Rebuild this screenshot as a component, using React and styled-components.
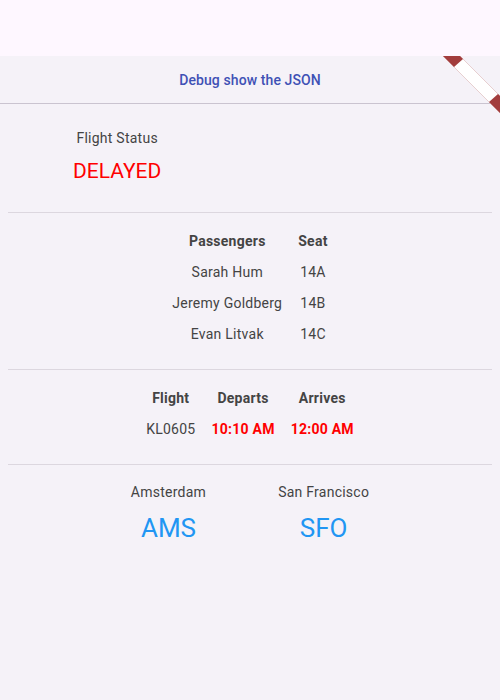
import React from "react";
import styled, { createGlobalStyle } from "styled-components";

const GlobalStyle = createGlobalStyle`
  body {
    margin: 0;
    background: #f5f2f8;
    font-family: Roboto, "Liberation Sans", sans-serif;
  }
`;

const Page = styled.div`
  position: relative;
  width: 500px;
  height: 700px;
  display: flex;
  flex-direction: column;
  background: #f5f2f8;
  overflow: hidden;
`;

const TopBar = styled.div`
  height: 56px;
  background: #fef7ff;
`;

const DebugBar = styled.div`
  height: 47px;
  display: flex;
  align-items: center;
  justify-content: center;
  border-bottom: 1px solid #cac4d0;
`;

const DebugLink = styled.span`
  color: #3f51b5;
  font-size: 14px;
  font-weight: 500;
  letter-spacing: 0.1px;
  cursor: pointer;
`;

const Content = styled.div`
  padding: 0 8px;
  display: flex;
  flex-direction: column;
`;

const Section = styled.div`
  padding: ${(p) => p.$pad};
  display: flex;
  justify-content: ${(p) => p.$justify || "center"};
  gap: ${(p) => p.$gap || "0"};
  border-bottom: ${(p) => (p.$last ? "none" : "1px solid #dcd7df")};
`;

const Block = styled.div`
  display: flex;
  flex-direction: column;
  align-items: center;
  margin-left: ${(p) => p.$offset || "0"};
`;

const Label = styled.div`
  font-size: 14px;
  line-height: 20px;
  color: #444;
  letter-spacing: 0.25px;
`;

const BigValue = styled.div`
  font-size: ${(p) => p.$size};
  line-height: ${(p) => p.$line};
  color: ${(p) => p.$color};
  margin-top: ${(p) => p.$top};
`;

const Table = styled.table`
  border-collapse: collapse;
`;

const Cell = styled.td`
  height: 31px;
  padding: 0 8px;
  text-align: center;
  font-size: 14px;
  color: ${(p) => p.$color || "#444"};
  font-weight: ${(p) => (p.$bold ? 700 : 400)};
  letter-spacing: 0.25px;
  white-space: nowrap;
`;

const Banner = styled.svg`
  position: absolute;
  left: 443px;
  top: 56px;
`;

const passengers = [
  ["Sarah Hum", "14A"],
  ["Jeremy Goldberg", "14B"],
  ["Evan Litvak", "14C"],
];

const DebugBanner = () => (
  <Banner width="57" height="57" viewBox="0 0 57 57">
    <polygon points="0,0 17,0 57,40 57,57" fill="#ffffff" stroke="#e2c4c4" strokeWidth="0.8" />
    <polygon points="0,0 17,0 20,3 11,11" fill="#a23d3d" />
    <polygon points="46,46 55,38 57,40 57,57" fill="#a23d3d" />
  </Banner>
);

const App = () => (
  <Page>
    <GlobalStyle />
    <TopBar />
    <DebugBar>
      <DebugLink>Debug show the JSON</DebugLink>
    </DebugBar>
    <DebugBanner />
    <Content>
      <Section $pad="24px 0 27px" $justify="flex-start">
        <Block $offset="65px">
          <Label>Flight Status</Label>
          <BigValue $size="21px" $line="28px" $color="#ff0000" $top="9px">
            DELAYED
          </BigValue>
        </Block>
      </Section>
      <Section $pad="12px 0 20px">
        <Table>
          <tbody>
            <tr>
              <Cell $bold>Passengers</Cell>
              <Cell $bold>Seat</Cell>
            </tr>
            {passengers.map(([name, seat]) => (
              <tr key={name}>
                <Cell>{name}</Cell>
                <Cell>{seat}</Cell>
              </tr>
            ))}
          </tbody>
        </Table>
      </Section>
      <Section $pad="12px 0 20px">
        <Table>
          <tbody>
            <tr>
              <Cell $bold>Flight</Cell>
              <Cell $bold>Departs</Cell>
              <Cell $bold>Arrives</Cell>
            </tr>
            <tr>
              <Cell>KL0605</Cell>
              <Cell $bold $color="#ff0000">10:10 AM</Cell>
              <Cell $bold $color="#ff0000">12:00 AM</Cell>
            </tr>
          </tbody>
        </Table>
      </Section>
      <Section $pad="17px 0 0" $gap="72px" $last>
        <Block>
          <Label>Amsterdam</Label>
          <BigValue $size="26px" $line="32px" $color="#2196f3" $top="10px">
            AMS
          </BigValue>
        </Block>
        <Block>
          <Label>San Francisco</Label>
          <BigValue $size="26px" $line="32px" $color="#2196f3" $top="10px">
            SFO
          </BigValue>
        </Block>
      </Section>
    </Content>
  </Page>
);

export default App;
